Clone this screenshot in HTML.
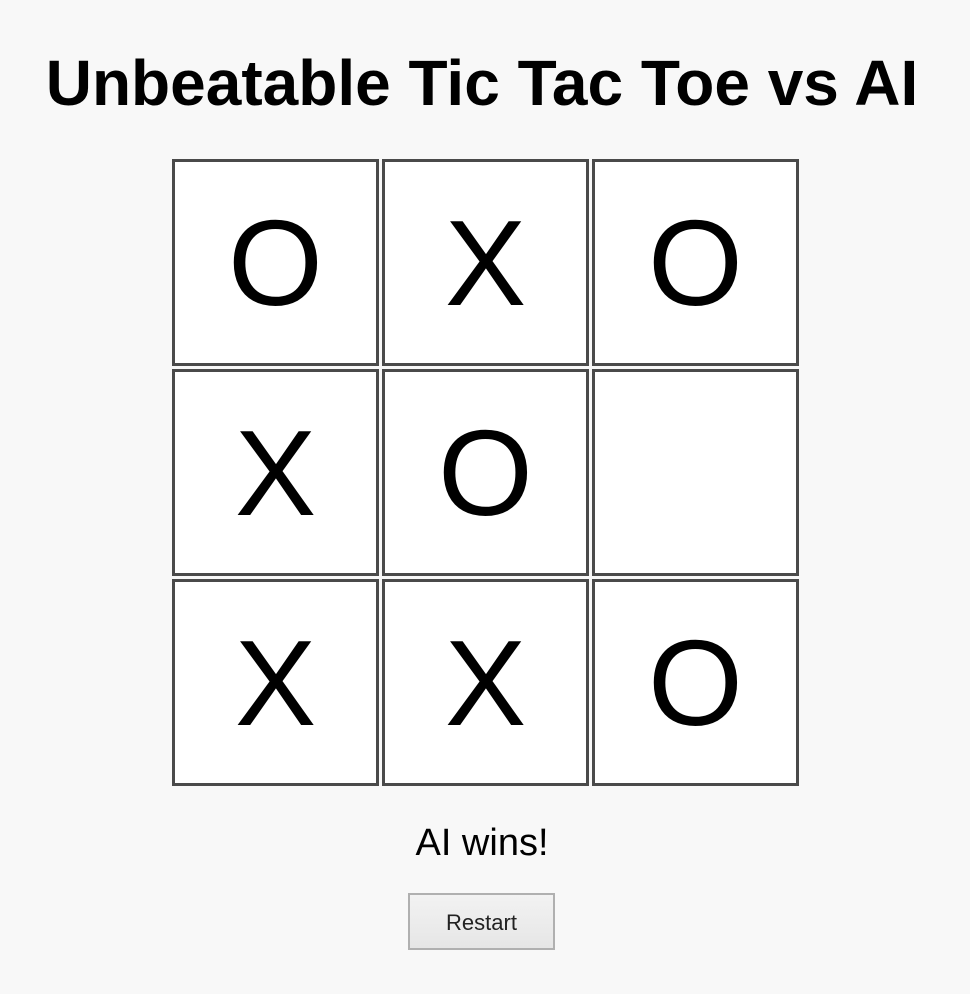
<!DOCTYPE html>
<html><head><meta charset="utf-8"><style>
html,body{margin:0;padding:0;background:#f8f8f8;width:970px;height:994px;overflow:hidden;font-family:"Liberation Sans",Arial,sans-serif;}
h1{position:absolute;top:45px;left:-3px;width:970px;text-align:center;margin:0;font-size:64px;font-weight:bold;line-height:76px;color:#000;}
.board{position:absolute;left:172px;top:159px;display:grid;grid-template-columns:repeat(3,207px);grid-template-rows:repeat(3,207px);gap:3px;}
.c{box-sizing:border-box;border:3px solid #4a4a4a;background:#fff;display:flex;align-items:center;justify-content:center;font-size:122px;line-height:1;color:#000;}
.c span{position:relative;top:0px}
.msg{position:absolute;top:820px;left:0;width:964px;text-align:center;font-size:38px;line-height:46px;}
button{position:absolute;left:408px;top:893px;width:147px;height:57px;border:2px solid #b0b0b0;background:linear-gradient(#f2f2f2,#e6e6e6);font-family:"Liberation Sans",Arial,sans-serif;font-size:22px;color:#222;padding:0;padding-top:3px;}
</style></head><body>
<h1>Unbeatable Tic Tac Toe vs AI</h1>
<div class="board">
<div class="c"><span>O</span></div><div class="c"><span>X</span></div><div class="c"><span>O</span></div>
<div class="c"><span>X</span></div><div class="c"><span>O</span></div><div class="c"></div>
<div class="c"><span>X</span></div><div class="c"><span>X</span></div><div class="c"><span>O</span></div>
</div>
<div class="msg">AI wins!</div>
<button>Restart</button>
</body></html>
